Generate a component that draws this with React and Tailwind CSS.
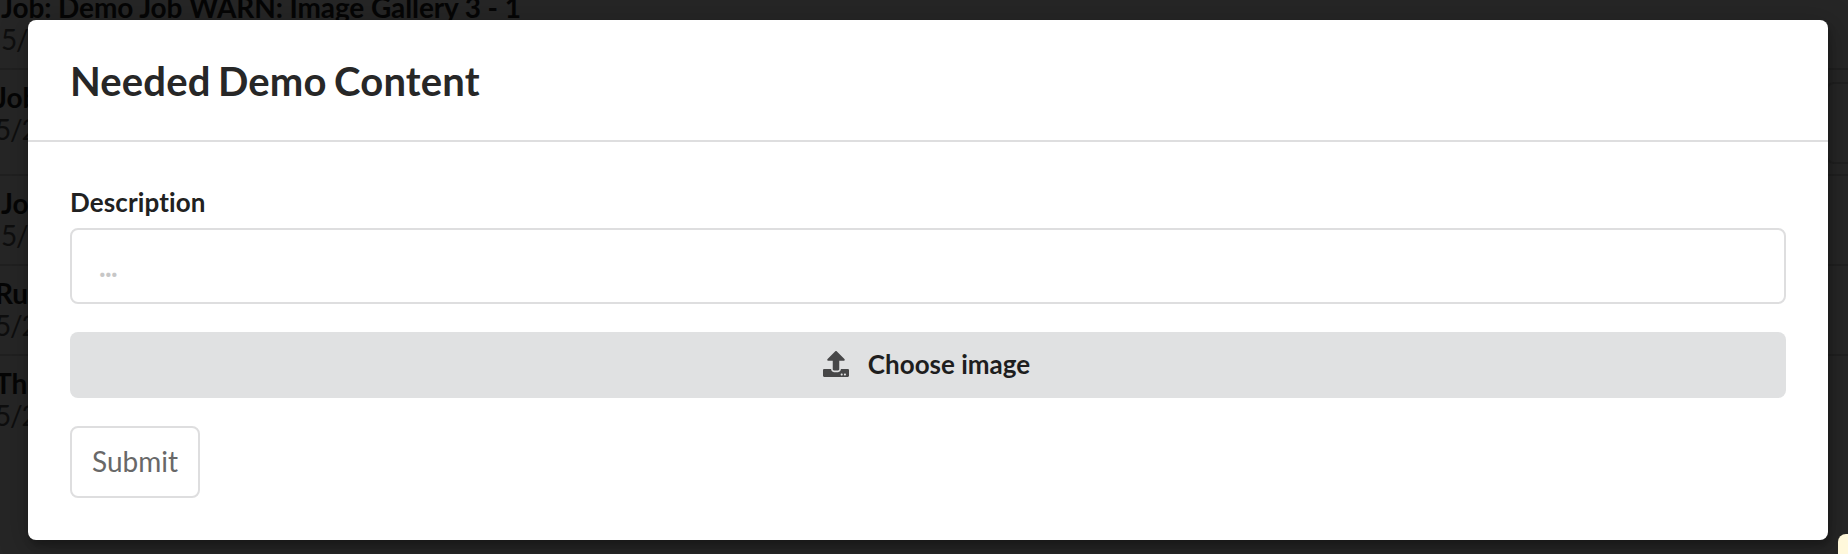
import { FaUpload } from "react-icons/fa";

const jobs = [
  { title: "Job: Demo Job WARN: Image Gallery 3 - 1", date: "5/26", box: "h-[80px] pt-[1px] -mt-[10px]", text: "ml-[1px]" },
  { title: "Job", date: "5/26", box: "h-[106px] pt-[11px]", text: "-ml-[5px]", action: true },
  { title: "Job", date: "5/26", box: "h-[90px] pt-[11px]", text: "ml-[1px]" },
  { title: "Run", date: "5/26", box: "h-[90px] pt-[11px]", text: "-ml-[5px]" },
  { title: "Thu", date: "5/26", box: "h-[90px] pt-[11px] border-transparent", text: "-ml-[5px]" },
];

function JobRow({ job }) {
  return (
    <div className={`flex shrink-0 justify-between border-b-2 border-[#202020] ${job.box}`}>
      <div className={`text-[28px] leading-[32px] whitespace-nowrap ${job.text}`}>
        <div className="font-bold tracking-[-0.1px] text-[#050505]">{job.title}</div>
        <div className="tracking-[-1.2px] text-[#0e0e0e]">{job.date}</div>
      </div>
      {job.action && <div className="mt-[1px] -mr-4 h-[82px] w-[38px] rounded-[8px] border-2 border-[#202020]" />}
    </div>
  );
}

export default function App() {
  return (
    <div className="relative grid h-[554px] w-[1848px] overflow-hidden bg-[#262626] font-['Lato',sans-serif] antialiased [font-variant-ligatures:none]">
      <div className="col-start-1 row-start-1 flex h-[554px] flex-col overflow-hidden">
        {jobs.map((job, i) => (
          <JobRow key={i} job={job} />
        ))}
      </div>

      <div className="z-10 col-start-1 row-start-1 mt-[20px] ml-[28px] h-[520px] w-[1800px] rounded-[8px] bg-white shadow-[2px_6px_6px_0_rgba(0,0,0,0.2),2px_6px_30px_4px_rgba(0,0,0,0.2)]">
        <h1 className="flex h-[122px] items-center border-b-2 border-[#dededf] px-[42px] pt-[2px] text-[40px] leading-[52px] font-bold tracking-[0.15px] [word-spacing:-2.4px] text-[#272727]">
          Needed Demo Content
        </h1>
        <form className="flex flex-col px-[42px] pt-[42px]">
          <label className="mb-[8px] h-[36px] text-[26px] leading-[36px] font-bold tracking-[0.13px] text-[#212121]">Description</label>
          <input
            className="h-[76px] rounded-[8px] border-2 border-[#dededf] px-[27px] text-[28px] text-[#212121] outline-none placeholder:font-bold placeholder:tracking-[-0.6px] placeholder:text-[#c7c7c7] placeholder:opacity-100"
            placeholder="..."
          />
          <button
            type="button"
            className="mt-[28px] flex h-[66px] items-center justify-center rounded-[8px] bg-[#e0e1e2] pr-[3px] pb-[2px] text-[26px] font-bold text-[#1e1e1e]"
          >
            <FaUpload className="mr-[19px] size-[26px] text-[#474748]" />
            Choose image
          </button>
          <button
            type="submit"
            className="mt-[28px] h-[72px] w-[130px] rounded-[8px] border-2 border-[#dededf] pb-[2px] text-[28px] text-[#686868]"
          >
            Submit
          </button>
        </form>
      </div>

      <div className="absolute top-[534px] left-[1838px] z-20 h-[40px] w-[40px] rounded-[8px] bg-[#fff8db]" />
    </div>
  );
}
